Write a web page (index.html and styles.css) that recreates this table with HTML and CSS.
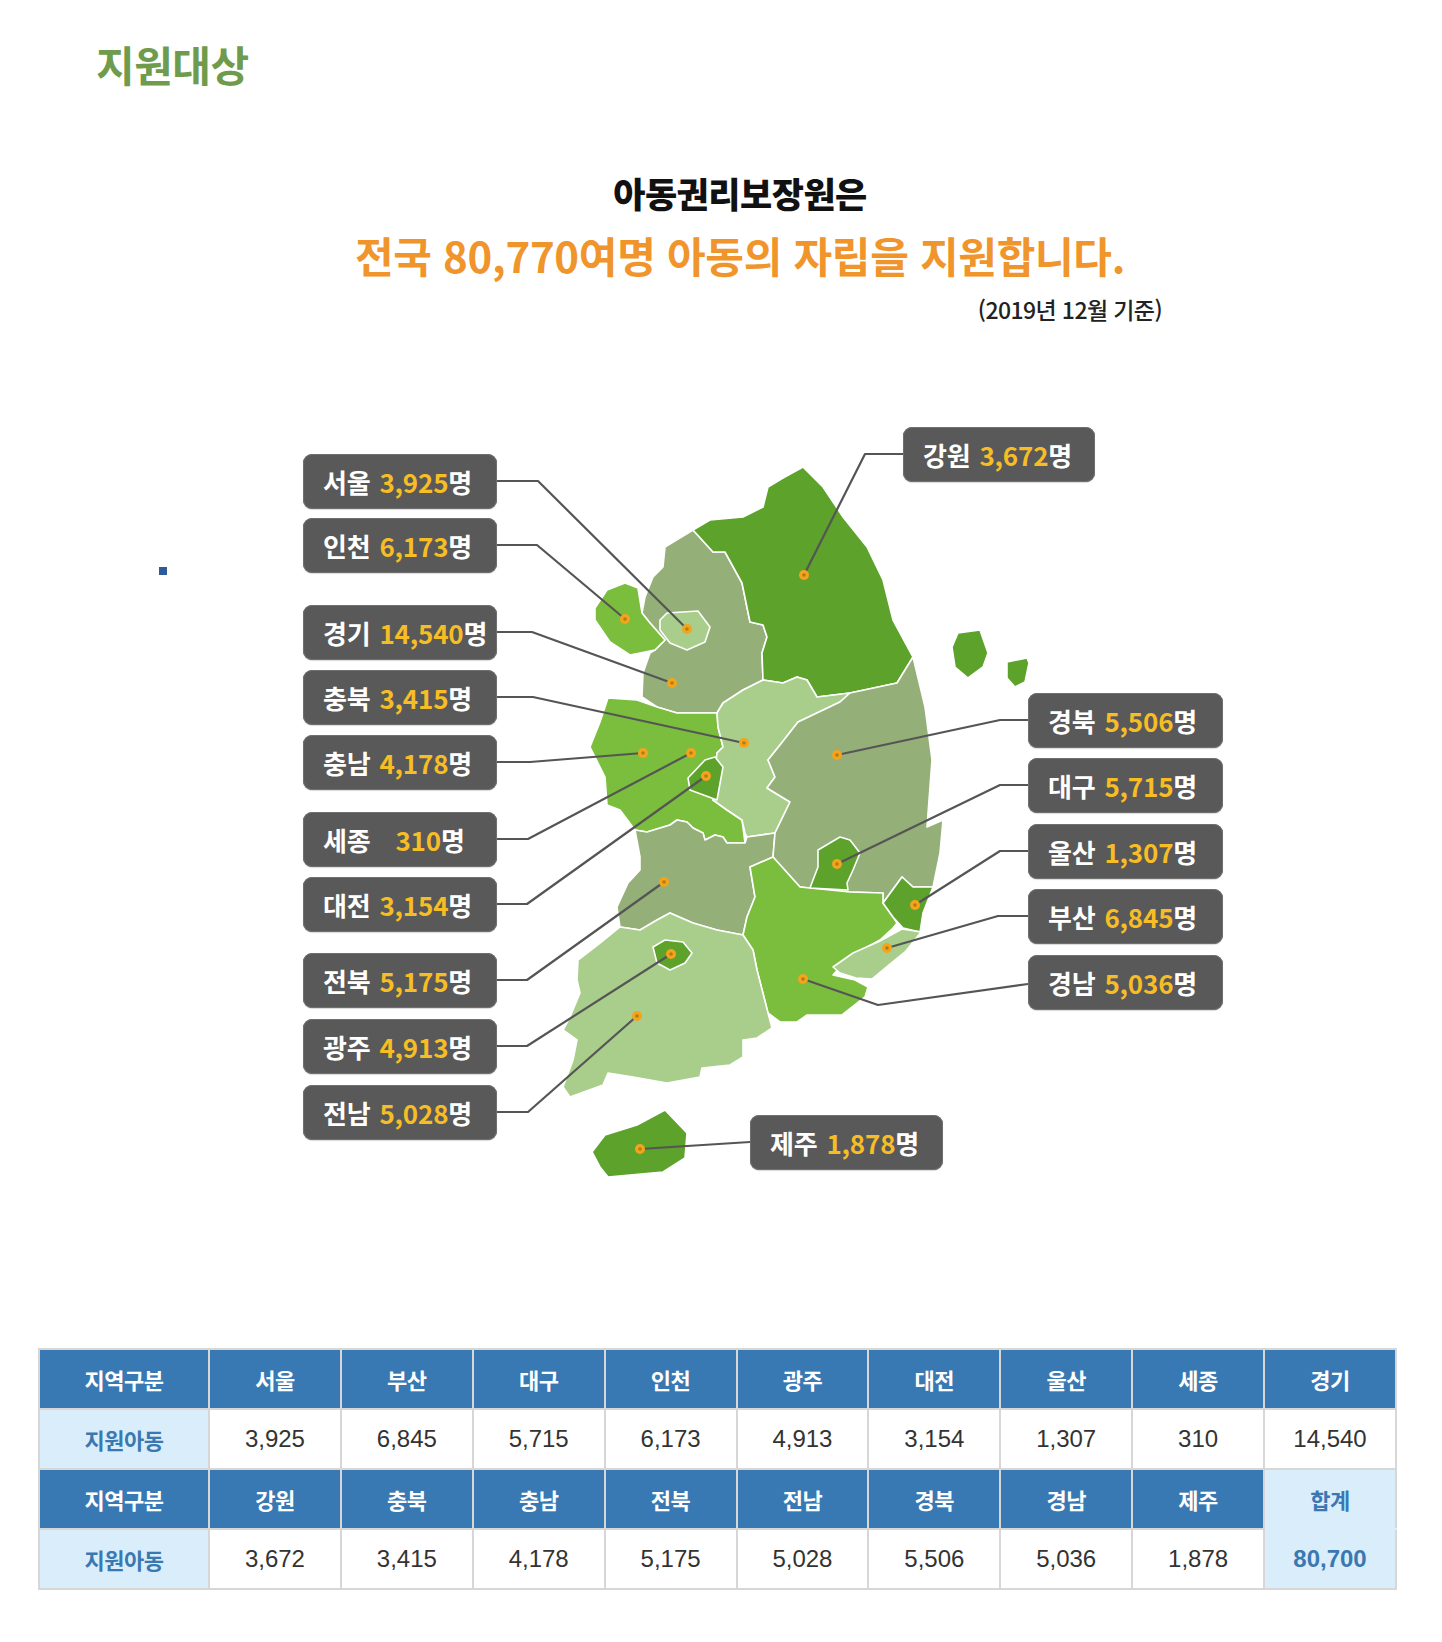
FILE: index.html
```html
<!DOCTYPE html>
<html lang="ko">
<head>
<meta charset="utf-8">
<title>지원대상</title>
<link rel="stylesheet" href="styles.css">
</head>
<body>
<div class="page">
  <header class="top">
    <h2 class="title">지원대상</h2>
    <div class="intro">
      <p class="intro-lead">아동권리보장원은</p>
      <p class="intro-main">전국 80,770여명 아동의 자립을 지원합니다.</p>
      <p class="intro-date">(2019년 12월 기준)</p>
    </div>
  </header>

  <section class="map">
    <span class="blue-dot"></span>
    <svg class="map-svg" viewBox="0 400 1442 800" width="1442" height="800" xmlns="http://www.w3.org/2000/svg">
      <g class="regions" stroke="#ffffff" stroke-width="1.6" stroke-linejoin="round">
        <!-- 경기 -->
        <polygon fill="#94af78" points="693,530 665,547 663,567 653,577 645,597 642,613 650,623 665,640 655,650 650,653 643,673 642,697 657,707 677,713 717,713 723,703 743,690 763,680 762,653 767,637 763,625 750,622 742,583 725,552 713,552"/>
        <!-- 강원 -->
        <polygon fill="#5ca22b" points="693,530 710,520 743,517 763,507 768,487 783,478 803,467 823,487 843,517 867,547 883,580 893,620 913,657 897,683 850,693 817,697 807,680 797,677 783,683 763,680 762,653 767,637 763,625 750,622 742,583 725,552 713,552"/>
        <!-- 충남 -->
        <polygon fill="#7bbd3d" points="608,698 637,700 657,707 677,713 717,713 718,727 723,747 717,753 713,790 713,800 727,810 742,820 745,843 727,843 723,837 715,835 705,840 703,833 693,828 687,822 677,820 670,825 647,832 635,830 620,810 607,805 605,777 590,747 600,722"/>
        <!-- 충북 -->
        <polygon fill="#a9ce8b" points="717,713 723,703 743,690 763,680 783,683 797,677 807,680 817,697 850,693 840,702 798,722 780,745 768,760 775,777 767,788 790,802 775,833 747,837 745,833 742,820 727,810 713,800 713,790 717,753 723,747 718,727"/>
        <!-- 전북 -->
        <polygon fill="#94af78" points="635,830 647,832 670,825 677,820 687,822 693,828 703,833 705,840 715,835 723,837 727,843 745,843 747,837 775,833 773,857 750,867 755,897 747,917 743,935 717,930 693,923 670,913 657,920 640,930 620,927 617,907 628,883 640,870 640,857"/>
        <!-- 경북 -->
        <polygon fill="#94af78" points="913,657 897,683 850,693 840,702 798,722 780,745 768,760 775,777 767,788 790,802 775,833 773,857 800,887 810,888 850,892 883,893 883,903 902,877 913,887 933,887 940,853 943,820 927,827 932,760 925,707"/>
        <!-- 경남 -->
        <polygon fill="#7bbd3d" points="750,867 773,857 800,887 810,888 850,892 883,893 883,903 893,917 897,923 893,928 880,940 858,952 840,967 833,975 855,980 868,987 865,997 842,1015 807,1015 797,1022 780,1022 768,1013 757,970 753,950 743,935 747,917 755,897"/>
        <!-- 전남 -->
        <polygon fill="#a9ce8b" points="620,927 640,930 657,920 670,913 693,923 717,930 743,935 753,950 757,970 768,1013 772,1028 757,1038 743,1040 743,1057 730,1065 702,1068 700,1077 667,1083 633,1077 608,1073 603,1085 570,1097 563,1087 573,1060 577,1040 563,1030 570,1017 580,993 577,980 578,960 600,943"/>
        <!-- 서울 -->
        <polygon fill="#a9ce8b" points="660,620 667,613 698,611 710,627 705,642 687,650 670,643 660,630"/>
        <!-- 인천 -->
        <polygon fill="#7bbd3d" points="595,608 607,590 625,583 638,588 642,613 650,623 665,640 655,650 630,655 610,642 595,620"/>
        <!-- 대전 -->
        <polygon fill="#5ca22b" points="688,778 705,760 715,757 723,767 717,800 690,790"/>
        <!-- 대구 -->
        <polygon fill="#5ca22b" points="818,850 840,837 850,840 860,853 853,870 847,883 848,890 810,888 813,880 818,867"/>
        <!-- 울산 -->
        <polygon fill="#5ca22b" points="883,903 902,877 913,887 933,887 923,913 920,932 903,928 893,917"/>
        <!-- 부산 -->
        <polygon fill="#a9ce8b" points="833,967 853,953 880,941 902,929 921,932 906,951 890,964 872,979 856,978 840,973"/>
        <!-- 광주 -->
        <polygon fill="#5ca22b" points="653,947 665,940 683,942 692,953 685,963 670,970 657,963"/>
        <!-- 제주 -->
        <polygon fill="#5ca22b" points="592,1152 605,1135 637,1125 665,1110 687,1133 685,1158 663,1172 608,1177 600,1167"/>
        <!-- 울릉도 / 독도 -->
        <polygon fill="#5ca22b" points="952,647 958,633 980,630 988,653 983,667 968,678 955,667"/>
        <polygon fill="#5ca22b" points="1007,662 1027,658 1029,663 1025,682 1015,687 1007,678"/>
      </g>
      <g class="leaders" fill="none" stroke="#555555" stroke-width="2.2" stroke-linejoin="round">
        <polyline points="497,481 538,481 687,629"/>
        <polyline points="497,545 537,545 625,619"/>
        <polyline points="497,632 532,632 672,683"/>
        <polyline points="497,697 533,697 744,743"/>
        <polyline points="497,762 530,762 643,753"/>
        <polyline points="497,839 528,839 691,753"/>
        <polyline points="497,904 527,904 706,776"/>
        <polyline points="497,980 527,980 664,882"/>
        <polyline points="497,1046 527,1046 671,954"/>
        <polyline points="497,1112 528,1112 637,1016"/>
        <polyline points="640,1149 750,1142"/>
        <polyline points="804,575 865,454 903,454"/>
        <polyline points="837,755 1000,720 1028,720"/>
        <polyline points="837,864 1000,785 1028,785"/>
        <polyline points="915,905 1000,851 1028,851"/>
        <polyline points="887,948 998,916 1028,916"/>
        <polyline points="803,979 878,1005 1028,984"/>
      </g>
      <g class="dots">
        <circle cx="687" cy="629" r="5"/><circle cx="625" cy="619" r="5"/>
        <circle cx="672" cy="683" r="5"/><circle cx="744" cy="743" r="5"/>
        <circle cx="643" cy="753" r="5"/><circle cx="691" cy="753" r="5"/>
        <circle cx="706" cy="776" r="5"/><circle cx="664" cy="882" r="5"/>
        <circle cx="671" cy="954" r="5"/><circle cx="637" cy="1016" r="5"/>
        <circle cx="640" cy="1149" r="5"/><circle cx="804" cy="575" r="5"/>
        <circle cx="837" cy="755" r="5"/><circle cx="837" cy="864" r="5"/>
        <circle cx="915" cy="905" r="5"/><circle cx="887" cy="948" r="5"/>
        <circle cx="803" cy="979" r="5"/>
      </g>
      <g class="dot-cores">
        <circle cx="687" cy="629" r="1.8"/><circle cx="625" cy="619" r="1.8"/>
        <circle cx="672" cy="683" r="1.8"/><circle cx="744" cy="743" r="1.8"/>
        <circle cx="643" cy="753" r="1.8"/><circle cx="691" cy="753" r="1.8"/>
        <circle cx="706" cy="776" r="1.8"/><circle cx="664" cy="882" r="1.8"/>
        <circle cx="671" cy="954" r="1.8"/><circle cx="637" cy="1016" r="1.8"/>
        <circle cx="640" cy="1149" r="1.8"/><circle cx="804" cy="575" r="1.8"/>
        <circle cx="837" cy="755" r="1.8"/><circle cx="837" cy="864" r="1.8"/>
        <circle cx="915" cy="905" r="1.8"/><circle cx="887" cy="948" r="1.8"/>
        <circle cx="803" cy="979" r="1.8"/>
      </g>
    </svg>

    <div class="tag tag-left" style="top:54px">서울<b>3,925</b>명</div>
    <div class="tag tag-left" style="top:118px">인천<b>6,173</b>명</div>
    <div class="tag tag-left" style="top:205px">경기<b>14,540</b>명</div>
    <div class="tag tag-left" style="top:270px">충북<b>3,415</b>명</div>
    <div class="tag tag-left" style="top:335px">충남<b>4,178</b>명</div>
    <div class="tag tag-left" style="top:412px">세종<b class="wide">310</b>명</div>
    <div class="tag tag-left" style="top:477px">대전<b>3,154</b>명</div>
    <div class="tag tag-left" style="top:553px">전북<b>5,175</b>명</div>
    <div class="tag tag-left" style="top:619px">광주<b>4,913</b>명</div>
    <div class="tag tag-left" style="top:685px">전남<b>5,028</b>명</div>

    <div class="tag tag-gangwon">강원<b>3,672</b>명</div>
    <div class="tag tag-jeju">제주<b>1,878</b>명</div>

    <div class="tag tag-right" style="top:293px">경북<b>5,506</b>명</div>
    <div class="tag tag-right" style="top:358px">대구<b>5,715</b>명</div>
    <div class="tag tag-right" style="top:424px">울산<b>1,307</b>명</div>
    <div class="tag tag-right" style="top:489px">부산<b>6,845</b>명</div>
    <div class="tag tag-right" style="top:555px">경남<b>5,036</b>명</div>
  </section>

  <section class="table-wrap">
    <table class="stats">
      <colgroup>
        <col class="col-head">
        <col><col><col><col><col><col><col><col><col>
      </colgroup>
      <tr class="row-head">
        <th>지역구분</th><th>서울</th><th>부산</th><th>대구</th><th>인천</th><th>광주</th><th>대전</th><th>울산</th><th>세종</th><th>경기</th>
      </tr>
      <tr class="row-data">
        <th class="label">지원아동</th><td>3,925</td><td>6,845</td><td>5,715</td><td>6,173</td><td>4,913</td><td>3,154</td><td>1,307</td><td>310</td><td>14,540</td>
      </tr>
      <tr class="row-head">
        <th>지역구분</th><th>강원</th><th>충북</th><th>충남</th><th>전북</th><th>전남</th><th>경북</th><th>경남</th><th>제주</th><th class="total total-top">합계</th>
      </tr>
      <tr class="row-data">
        <th class="label">지원아동</th><td>3,672</td><td>3,415</td><td>4,178</td><td>5,175</td><td>5,028</td><td>5,506</td><td>5,036</td><td>1,878</td><td class="total total-bottom">80,700</td>
      </tr>
    </table>
  </section>
</div>
</body>
</html>
```

FILE: styles.css
```css
* { box-sizing: border-box; }

html, body {
  margin: 0;
  padding: 0;
  background: #ffffff;
}

body {
  font-family: "Noto Sans CJK KR", "Noto Sans", sans-serif;
  color: #222222;
}

.page {
  width: 1442px;
}

.top {
  height: 400px;
}

.title {
  margin: 0;
  padding: 43px 0 0 96px;
  font-size: 42px;
  line-height: 42px;
  font-weight: 700;
  color: #6e9b4c;
  letter-spacing: -0.5px;
}

.intro {
  width: 820px;
  margin-left: 330px;
  text-align: center;
}

.intro p {
  margin: 0;
}

.intro-lead {
  margin-top: 90px !important;
  font-size: 35px;
  line-height: 35px;
  font-weight: 900;
  color: #111111;
  letter-spacing: -0.5px;
}

.intro-main {
  margin-top: 24px !important;
  font-size: 42px;
  line-height: 42px;
  font-weight: 700;
  color: #f0952b;
  letter-spacing: -0.3px;
}

.intro-date {
  margin-top: 22px !important;
  margin-right: -12px !important;
  text-align: right;
  font-size: 23px;
  line-height: 23px;
  font-weight: 500;
  color: #222222;
  letter-spacing: -0.6px;
}

/* ---------- map ---------- */
.map {
  position: relative;
  height: 800px;
}

.map-svg {
  position: absolute;
  left: 0;
  top: 0;
  display: block;
}

.dots circle { fill: #f4a41c; }
.dot-cores circle { fill: #b57a14; }

.blue-dot {
  position: absolute;
  left: 159px;
  top: 167px;
  width: 8px;
  height: 8px;
  background: #2e5b9c;
}

.tag {
  position: absolute;
  height: 55px;
  padding-left: 20px;
  border-radius: 9px;
  background: #595959;
  box-shadow: inset 0 0 0 1px #707070, 0 1px 1px rgba(0, 0, 0, 0.15);
  color: #ffffff;
  font-size: 26px;
  line-height: 55px;
  font-weight: 700;
  white-space: nowrap;
  letter-spacing: -0.2px;
}

.tag b {
  margin-left: 9px;
  color: #f6bd24;
  font-weight: 700;
}

.tag b.wide {
  margin-left: 25px;
}

.tag-left {
  left: 303px;
  width: 194px;
}

.tag-right {
  left: 1028px;
  width: 195px;
}

.tag-gangwon {
  left: 903px;
  top: 27px;
  width: 192px;
}

.tag-jeju {
  left: 750px;
  top: 715px;
  width: 193px;
}

/* ---------- table ---------- */
.table-wrap {
  padding: 148px 0 50px 38px;
}

.stats {
  width: 1359px;
  table-layout: fixed;
  border-collapse: collapse;
  border: 2px solid #d7d7d7;
}

.col-head { width: 170px; }

.stats th,
.stats td {
  height: 60px;
  padding: 0;
  border: 2px solid #d7d7d7;
  text-align: center;
  vertical-align: middle;
}

.row-head th {
  background: #3979b3;
  color: #ffffff;
  font-size: 22px;
  font-weight: 700;
  letter-spacing: -0.5px;
}

.stats th.label {
  background: #daedfb;
  color: #3a78b2;
  font-size: 22px;
  font-weight: 700;
  letter-spacing: -0.5px;
}

.stats td {
  background: #ffffff;
  color: #333333;
  font-family: "Liberation Sans", Arial, sans-serif;
  font-size: 24px;
}

.stats .total {
  background: #daedfb;
  color: #3a78b2;
  font-weight: 700;
}

.stats th.total {
  font-size: 22px;
}

.stats td.total {
  font-family: "Liberation Sans", Arial, sans-serif;
  font-size: 24px;
}

.stats .total-top {
  border-bottom-color: #daedfb;
}

.stats .total-bottom {
  border-top-color: #daedfb;
}
```
